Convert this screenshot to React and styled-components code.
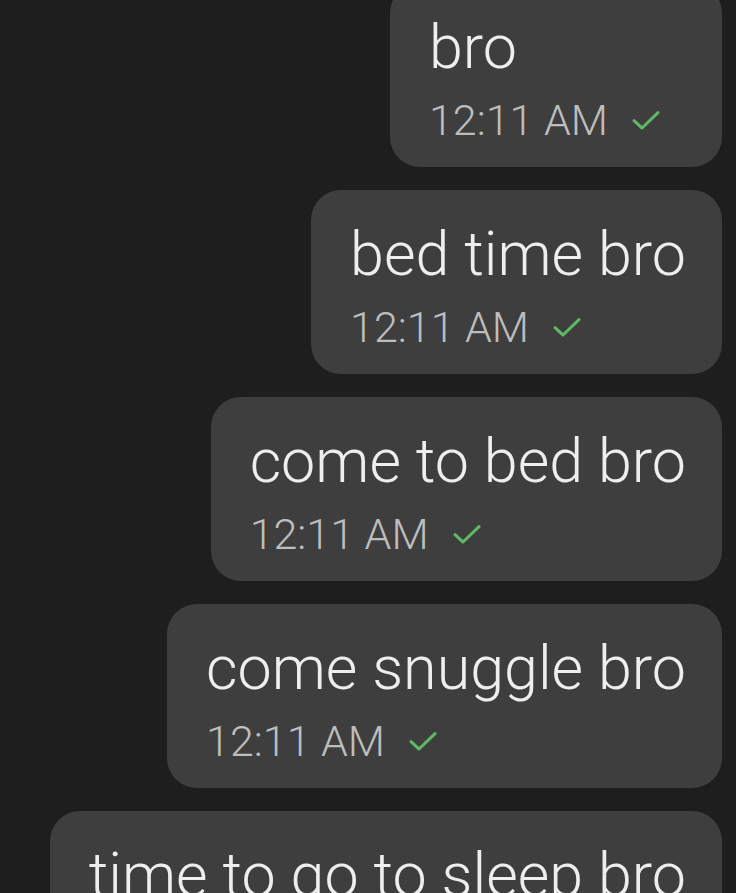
import React from 'react'
import styled, { createGlobalStyle } from 'styled-components'

const messages = [
  'bro',
  'bed time bro',
  'come to bed bro',
  'come snuggle bro',
  'time to go to sleep bro',
]

export default function App() {
  return (
    <>
      <GlobalStyle />
      <Screen>
        <Thread>
          {messages.map((text, i) => (
            <Bubble key={i}>
              <Body>{text}</Body>
              <Meta>
                <span>12:11 AM</span>
                <Check />
              </Meta>
            </Bubble>
          ))}
        </Thread>
      </Screen>
    </>
  )
}

const Check = () => (
  <CheckIcon viewBox="0 0 24 24">
    <path d="M3 12.5 L9 18 L21 6.5" />
  </CheckIcon>
)

const GlobalStyle = createGlobalStyle`
  html, body {
    margin: 0;
    padding: 0;
    background: #1e1e1e;
  }
  body {
    font-family: Roboto, "Noto Sans", sans-serif;
  }
`

const Screen = styled.div`
  width: 736px;
  height: 893px;
  overflow: hidden;
  background: #1e1e1e;
`

const Thread = styled.div`
  display: flex;
  flex-direction: column;
  align-items: flex-end;
  gap: 23px;
  margin-top: -17px;
  padding-right: 14px;
`

const Bubble = styled.div`
  box-sizing: border-box;
  height: 184px;
  padding: 28px 36px 22px 39px;
  background: #3e3e3e;
  border-radius: 30px;
  flex-shrink: 0;
`

const Body = styled.div`
  font-size: 61px;
  font-weight: 300;
  line-height: 72px;
  color: #eeeeee;
  white-space: nowrap;
`

const Meta = styled.div`
  display: flex;
  align-items: center;
  gap: 22px;
  margin-top: 13px;
  margin-right: 24px;
  font-size: 43px;
  font-weight: 300;
  line-height: 48px;
  color: #bdbdbd;
  white-space: nowrap;
`

const CheckIcon = styled.svg`
  width: 32px;
  height: 32px;
  fill: none;
  stroke: #5fb865;
  stroke-width: 2.3;
  stroke-linecap: round;
  stroke-linejoin: round;
`
